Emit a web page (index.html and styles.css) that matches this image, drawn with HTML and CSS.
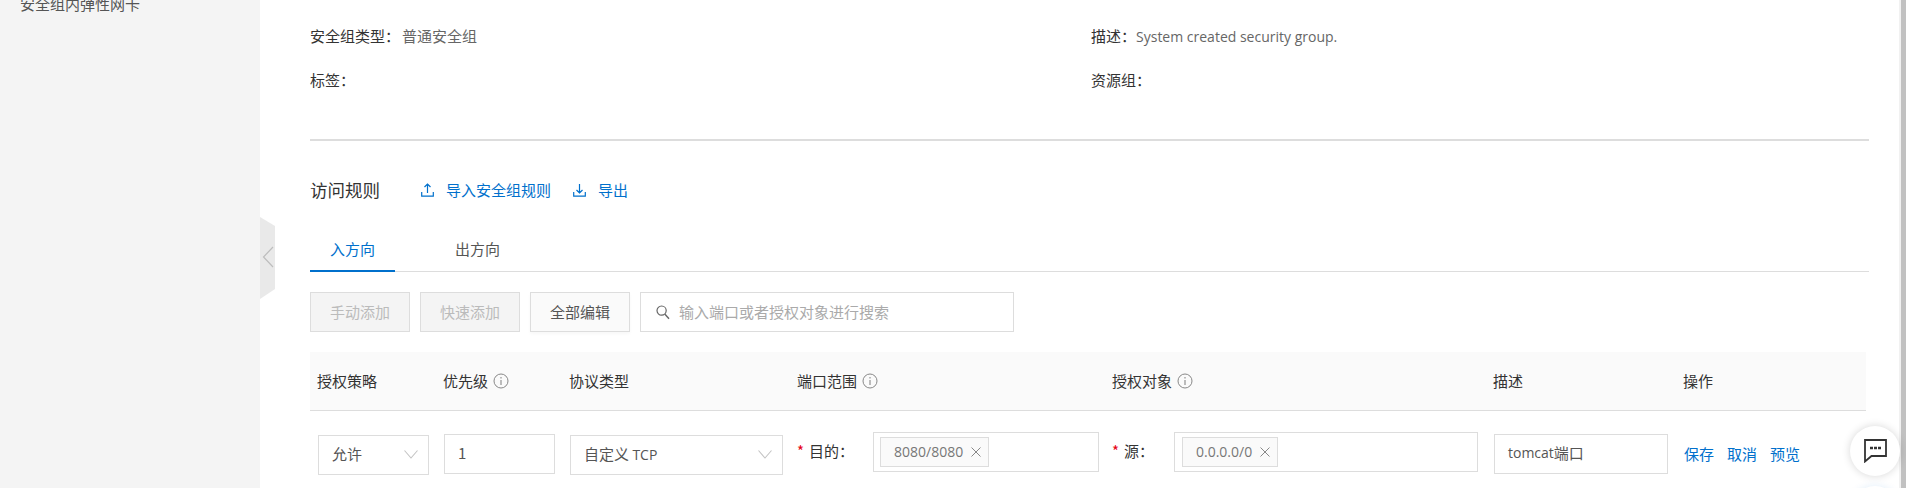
FILE: index.html
```html
<!DOCTYPE html>
<html lang="zh-CN">
<head>
<meta charset="utf-8">
<title>安全组</title>
<link rel="stylesheet" href="styles.css">
</head>
<body>
<div class="app">
  <aside class="sidebar"><div class="side-item">安全组内弹性网卡</div></aside>
  <main class="main">
    <svg class="collapse" width="15" height="82" viewBox="0 0 15 82"><polygon points="0,0 15,9 15,72 0,82" fill="#e9e9e9"/><polyline points="13,30 3.5,40 13,50" fill="none" stroke="#bdbdbd" stroke-width="1.2"/></svg>
    <section class="info">
      <div class="info-row first"><span class="label">安全组ID/名称：</span><span class="value">sg-group / launch-wizard</span></div>
      <div class="info-row first"><span class="label">所属专有网络：</span><span class="value">vpc-group</span></div>
      <div class="info-row"><span class="label">安全组类型：</span><span class="value gap">普通安全组</span></div>
      <div class="info-row"><span class="label">描述：</span><span class="value latin">System created security group.</span></div>
      <div class="info-row"><span class="label">标签：</span></div>
      <div class="info-row"><span class="label">资源组：</span></div>
    </section>
    <hr class="divider">
    <div class="section-head">
      <h2 class="title">访问规则</h2>
      <a class="link action"><svg width="13" height="14" viewBox="0 0 13 14"><path d="M6.5 10V1M3.5 4 6.5 1l3 3M.7 9v4.2h11.6V9" fill="none" stroke="#0070cc" stroke-width="1.2"/></svg>导入安全组规则</a>
      <a class="link action"><svg width="13" height="14" viewBox="0 0 13 14"><path d="M6.5 1v9M3.5 7l3 3 3-3M.7 9v4.2h11.6V9" fill="none" stroke="#0070cc" stroke-width="1.2"/></svg>导出</a>
    </div>
    <div class="tabs">
      <div class="tab active">入方向</div>
      <div class="tab">出方向</div>
    </div>
    <div class="toolbar">
      <button class="btn disabled">手动添加</button>
      <button class="btn disabled">快速添加</button>
      <button class="btn">全部编辑</button>
      <div class="search">
        <svg width="14" height="15" viewBox="0 0 14 15"><circle cx="5.6" cy="5.6" r="4.6" fill="none" stroke="#666" stroke-width="1.2"/><path d="M9 9.2l4 4.6" stroke="#666" stroke-width="1.4"/></svg>
        <span>输入端口或者授权对象进行搜索</span>
      </div>
    </div>
    <div class="grid table-head">
      <div>授权策略</div>
      <div class="with-icon">优先级<svg class="info-icon" width="16" height="16" viewBox="0 0 16 16"><circle cx="8" cy="8" r="7" fill="none" stroke="#888"/><path d="M8 7v5M8 4v1.5" stroke="#888" stroke-width="1.1"/></svg></div>
      <div>协议类型</div>
      <div class="with-icon">端口范围<svg class="info-icon" width="16" height="16" viewBox="0 0 16 16"><circle cx="8" cy="8" r="7" fill="none" stroke="#888"/><path d="M8 7v5M8 4v1.5" stroke="#888" stroke-width="1.1"/></svg></div>
      <div class="with-icon">授权对象<svg class="info-icon" width="16" height="16" viewBox="0 0 16 16"><circle cx="8" cy="8" r="7" fill="none" stroke="#888"/><path d="M8 7v5M8 4v1.5" stroke="#888" stroke-width="1.1"/></svg></div>
      <div>描述</div>
      <div>操作</div>
    </div>
    <div class="grid table-row">
      <div class="field select w-policy">允许<svg width="14" height="9" viewBox="0 0 14 9"><path d="M.5.5 7 8l6.500-7.500" fill="none" stroke="#c4c4c4" stroke-width="1.100"/></svg></div>
      <div class="field input w-policy">1</div>
      <div class="field select w-proto"><span>自定义 <span class="latin">TCP</span></span><svg width="14" height="9" viewBox="0 0 14 9"><path d="M.5.5 7 8l6.500-7.500" fill="none" stroke="#c4c4c4" stroke-width="1.100"/></svg></div>
      <div class="rule">
        <label class="rule-label lbl-dest"><i>*</i>目的：</label>
        <div class="tags w-dest"><span class="tag latin">8080/8080<svg width="10" height="10" viewBox="0 0 10 10"><path d="M.5.5l9 9M9.500.5l-9 9" stroke="#888"/></svg></span></div>
      </div>
      <div class="rule">
        <label class="rule-label lbl-src"><i>*</i>源：</label>
        <div class="tags w-src"><span class="tag latin">0.0.0.0/0<svg width="10" height="10" viewBox="0 0 10 10"><path d="M.5.5l9 9M9.500.5l-9 9" stroke="#888"/></svg></span></div>
      </div>
      <div class="field input w-desc"><span class="latin">tomcat</span>端口</div>
      <div class="ops"><a class="link">保存</a><a class="link">取消</a><a class="link">预览</a></div>
    </div>
    <div class="chat">
      <svg width="23" height="24" viewBox="0 0 23 24"><path d="M1 1h21v16H7.500L1 22.500z" fill="#fff" stroke="#333" stroke-width="1.800"/><path d="M6 9h3M10 9h3M14 9h3" stroke="#333" stroke-width="2.400"/></svg>
    </div>
    <div class="chat-next"></div>
  </main>
  <div class="scrollbar"></div>
</div>
</body>
</html>
```
FILE: styles.css
```css
* { box-sizing: border-box; }
html, body { margin: 0; height: 488px; overflow: hidden; background: #fff; }
body { font: 15px/20px "Noto Sans CJK SC", "Open Sans", sans-serif; color: #333; }
.latin { font-family: "Open Sans", "Noto Sans CJK SC", sans-serif; font-size: 14px; }
.app { display: flex; width: 1906px; height: 488px; overflow: hidden; }
.sidebar { width: 260px; flex: none; background: #f4f4f4; padding-left: 20px; color: #555; }
.side-item { margin-top: -6px; }
.main { flex: 1; position: relative; padding: 0 30px 0 50px; min-width: 0; }
.scrollbar { width: 7px; flex: none; background: #c1c1c1; border-left: 2px solid #f1f1f1; }
.collapse { position: absolute; left: 0; top: 217px; }
.info { display: grid; grid-template-columns: 781px 1fr; margin-top: -30px; }
.info-row { height: 44px; line-height: 44px; white-space: nowrap; }
.info-row.first { line-height: 40px; }
.label { color: #333; }
.value { color: #666; }
.value.gap { margin-left: 2px; }
.divider { border: 0; height: 2px; background: #ddd; margin: 37px 0 0; }
.section-head { display: flex; align-items: center; height: 24px; margin-top: 37px; }
.title { margin: 0 41px 0 0; font-size: 17.500px; font-weight: 400; color: #333; line-height: 24px; }
.link { color: #0070cc; }
.action { display: flex; align-items: center; gap: 12px; margin-right: 22px; }
.tabs { display: flex; gap: 40px; height: 46px; margin-top: 24px; border-bottom: 1px solid #ddd; }
.tab { width: 85px; height: 46px; line-height: 45px; text-align: center; color: #555; }
.tab.active { color: #0070cc; border-bottom: 2px solid #0070cc; }
.toolbar { display: flex; gap: 10px; margin-top: 20px; }
.btn { width: 100px; height: 40px; padding: 0 0 1px; border: 1px solid #ddd; background: #fafafa; color: #555; font: inherit; box-shadow: 0 2px 3px rgba(0,0,0,.03); }
.btn.disabled { background: #f4f4f4; color: #bbb; box-shadow: none; }
.search { width: 374px; height: 40px; border: 1px solid #ddd; display: flex; align-items: center; gap: 9px; padding-left: 15px; color: #aaa; }
.grid { display: grid; grid-template-columns: 126px 126px 228px 315px 381px 190px 1fr; padding-left: 8px; width: 1556px; }
.table-head { margin-top: 20px; height: 59px; background: #fafafa; border-bottom: 1px solid #ddd; align-items: center; padding-left: 7px; }
.with-icon { display: flex; align-items: center; }
.info-icon { margin-left: 5px; }
.table-row { padding-top: 21px; align-items: start; }
.field { height: 40px; border: 1px solid #ddd; display: flex; align-items: center; color: #555; padding-bottom: 2px; }
.input { margin-top: 2px; padding-left: 13px; }
.select { margin-top: 3px; padding: 0 10px 2px 13px; justify-content: space-between; }
.w-policy { width: 111px; }
.w-proto { width: 213px; }
.w-desc { width: 174px; }
.rule { display: flex; align-items: center; }
.rule-label { color: #333; padding-bottom: 2px; margin-left: -1px; margin-right: 1px; }
.rule-label i { color: #e60012; font-style: normal; margin-right: 5px; }
.lbl-dest { width: 75px; }
.lbl-src { width: 61px; }
.tags { height: 40px; border: 1px solid #ddd; padding: 4px 6px; }
.w-dest { width: 226px; }
.w-src { width: 304px; padding-left: 7px; }
.tag { display: inline-flex; align-items: center; height: 30px; padding: 0 7px 0 13px; gap: 8px; background: #fafafa; border: 1px solid #ddd; color: #777; }
.ops { display: flex; gap: 13px; margin-top: 12px; }
.chat { position: absolute; left: 1590px; top: 426px; width: 50px; height: 50px; border-radius: 50%; background: #fff; box-shadow: 0 0 9px rgba(0,0,0,.16); display: flex; align-items: center; justify-content: center; }
.chat-next { position: absolute; left: 1590px; top: 486px; width: 50px; height: 50px; border-radius: 50%; background: #fff; box-shadow: 0 0 8px rgba(0,112,204,.12); }
```
